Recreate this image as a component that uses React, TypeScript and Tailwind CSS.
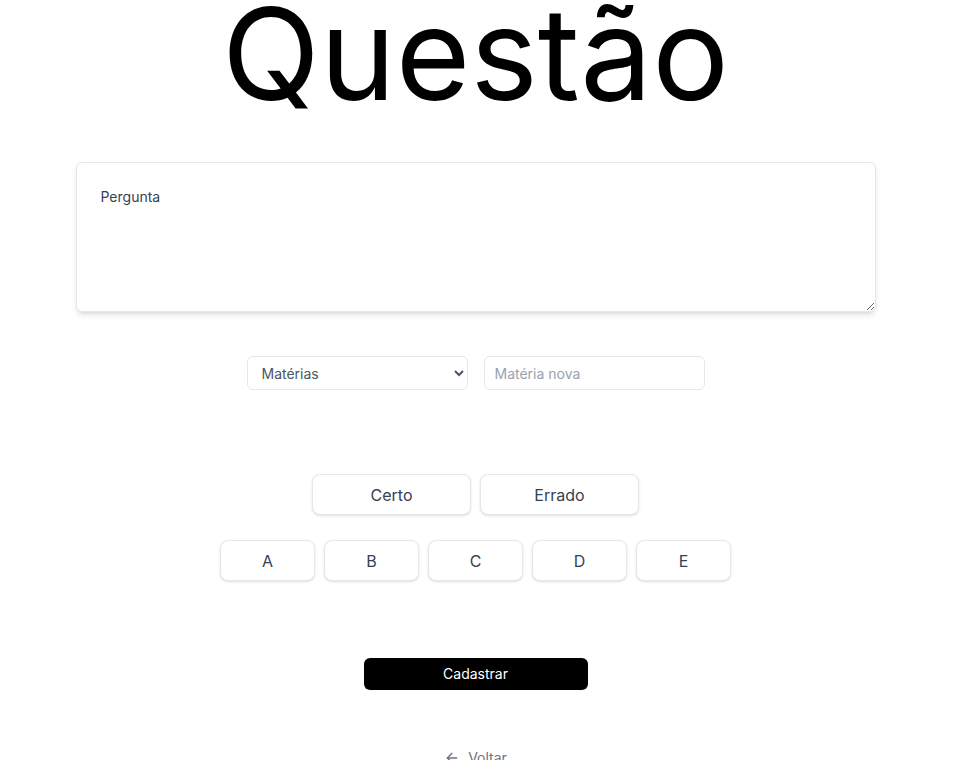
import { ArrowLeft } from "lucide-react";

const letters = ["A", "B", "C", "D", "E"];

export default function App() {
  return (
    <div className="min-h-screen bg-white" style={{ fontFamily: "Inter, 'Noto Sans', sans-serif" }}>
      <div className="w-[951px] flex flex-col items-center">
        {/* Title */}
        <h1 className="text-[128px] leading-[107px] font-normal text-black">Questão</h1>

        {/* Question */}
        <textarea
          placeholder="Pergunta"
          className="mt-[55px] w-[800px] h-[150px] px-6 py-6 text-sm text-gray-700 placeholder:text-gray-700 bg-white border border-gray-200 rounded-md shadow-md outline-none"
        />

        {/* Subject */}
        <div className="mt-[44px] flex gap-4">
          <select className="w-[221px] h-[34px] px-2.5 text-sm text-gray-600 bg-white border border-gray-200 rounded-md outline-none">
            <option>Matérias</option>
          </select>
          <input
            placeholder="Matéria nova"
            className="w-[221px] h-[34px] px-2.5 text-sm text-gray-700 placeholder:text-gray-400 bg-white border border-gray-200 rounded-md outline-none"
          />
        </div>

        {/* Answer type */}
        <div className="mt-[84px] flex gap-[9px]">
          <button className="w-[159px] h-[41px] text-base text-gray-700 bg-white border border-gray-200 rounded-lg shadow-sm">
            Certo
          </button>
          <button className="w-[159px] h-[41px] text-base text-gray-700 bg-white border border-gray-200 rounded-lg shadow-sm">
            Errado
          </button>
        </div>

        <div className="mt-[25px] flex gap-[9px]">
          {letters.map((l) => (
            <button
              key={l}
              className="w-[95px] h-[41px] text-base text-gray-700 bg-white border border-gray-200 rounded-lg shadow-sm"
            >
              {l}
            </button>
          ))}
        </div>

        <button className="mt-[77px] w-[224px] h-[32px] text-sm text-white bg-black rounded-md">
          Cadastrar
        </button>

        <a href="#" className="mt-[58px] flex items-center gap-2 text-sm text-gray-500">
          <ArrowLeft className="w-4 h-4" />
          Voltar
        </a>
      </div>
    </div>
  );
}
